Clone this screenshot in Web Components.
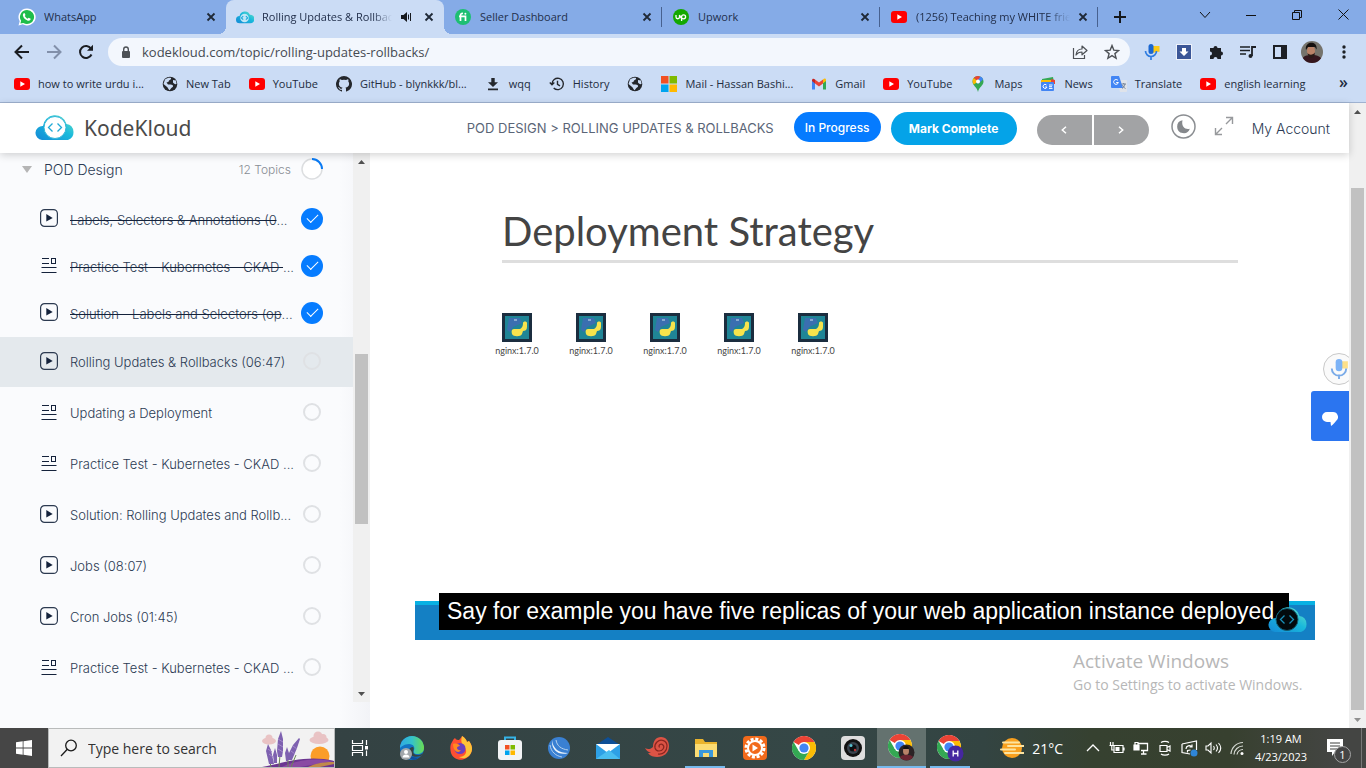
<!DOCTYPE html>
<html lang="en">
<head>
<meta charset="utf-8">
<title>Rolling Updates &amp; Rollbacks - KodeKloud</title>
<style>
html, body { margin: 0; height: 100%; }
body { overflow: hidden; background: #fff; font-family: "Open Sans", "Noto Sans", sans-serif; }
</style>
</head>
<body>
<app-desktop></app-desktop>
<script>
/* name: [width, height, viewBox, markup] */
const chromeArt = '<circle cx="12" cy="12" r="12" fill="#fff"/><path d="M12 12L1.6 6A12 12 0 0 1 22.4 6z" fill="#ea4335"/><path d="M12 6h10.4A12 12 0 0 1 12 24l5.200-9z" fill="#fbbc05"/><path d="M17.200 15L12 24A12 12 0 0 1 1.600 6l5.200 9z" fill="#34a853"/><circle cx="12" cy="12" r="6" fill="#fff"/><circle cx="12" cy="12" r="4.600" fill="#4285f4"/>';
const cloudGrad = '<defs><linearGradient id="g" x1="0" x2="1" y1="1" y2="0"><stop offset="0" stop-color="#1489d6"/><stop offset=".55" stop-color="#19b9dc"/><stop offset="1" stop-color="#6ce3c4"/></linearGradient></defs>';
const ytArt = '<rect y="2" width="16" height="12" rx="3" fill="#f00"/><path d="M6.300 5.300v5.400L11 8z" fill="#fff"/>';
const ICONS = {
  whatsapp: [18, 18, '0 0 18 18', '<path d="M9 .5a8.500 8.500 0 0 0-7.300 12.800L.5 17.500l4.300-1.200A8.500 8.500 0 1 0 9 .5z" fill="#fff"/><path d="M9 2a7 7 0 0 0-5.900 10.800L2.400 15.600l2.900-.7A7 7 0 1 0 9 2z" fill="#1fbd4a"/><path d="M6.500 5l1 2-.7 1.100c.7 1.300 1.500 2 2.800 2.700l1-1 2.100 1c0 1.400-1.400 2.300-2.900 1.900C7.300 12 5.300 9.900 4.900 7.600 4.700 6.300 5.400 5 6.500 5z" fill="#fff"/>'],
  cloudfav: [18, 18, '0 0 40 40', cloudGrad + '<path d="M8 34a8 8 0 0 1 0-16 12 12 0 0 1 23-3 9.500 9.500 0 0 1 1 19z" fill="url(#g)"/><circle cx="19" cy="22" r="9.500" fill="#bfe6f6"/><path d="M16 18l-4 4 4 4M22 18l4 4-4 4" fill="none" stroke="#19a9dc" stroke-width="2.500"/>'],
  cloud: [40, 26, '0 0 40 26', cloudGrad + '<path d="M7 25a7 7 0 0 1 1-14 12 12 0 0 1 23.500-2 8.300 8.300 0 0 1 1.500 16z" fill="url(#g)"/><circle cx="20" cy="12.500" r="11" fill="#fff" stroke="#2fb6d9"/><path d="M17.500 8.500L13.500 12.500l4 4M22.500 8.500l4 4-4 4" fill="none" stroke="#1fa9d6" stroke-width="1.300"/>'],
  cloudmark: [40, 26, '0 0 40 26', cloudGrad + '<path d="M7 25a7 7 0 0 1 1-14 12 12 0 0 1 23.500-2 8.300 8.300 0 0 1 1.500 16z" fill="url(#g)"/><circle cx="19" cy="12.500" r="11" fill="#020a0d" stroke="#135e74"/><path d="M16.500 8.500l-4 4 4 4M21.500 8.500l4 4-4 4" fill="none" stroke="#1990b8" stroke-width="1.300"/>'],
  fiverr: [16, 16, '0 0 16 16', '<circle cx="8" cy="8" r="8" fill="#1dbf73"/><path d="M5.500 12V6.500c0-1.500.8-2.200 2.500-2M4 7.400h6.500V12" fill="none" stroke="#fff" stroke-width="1.700"/><circle cx="10.400" cy="4.800" r="1" fill="#fff"/>'],
  upwork: [16, 16, '0 0 16 16', '<circle cx="8" cy="8" r="8" fill="#14a800"/><path d="M3 6v2a1.700 1.700 0 0 0 3.500 0V6c1 2.300 1.500 3 2.500 3.900M8.600 12V7.800a2 2 0 1 1 2 2c-1.200 0-2.200-.7-3-2" fill="none" stroke="#fff" stroke-width="1.300"/>'],
  youtube: [16, 16, '0 0 16 16', ytArt],
  close: [10, 10, '0 0 10 10', '<path d="M1.500 1.500l7 7M8.500 1.500l-7 7" stroke="#1f2937" stroke-width="1.800"/>'],
  audio: [12, 12, '0 0 12 12', '<path d="M1 4h2.500L7 1v10L3.500 8H1z" fill="#15181d"/><path d="M8.500 3.500v5M10.500 2v8" stroke="#15181d"/>'],
  plus: [12, 12, '0 0 12 12', '<path d="M6 0v12M0 6h12" stroke="#15181d" stroke-width="2"/>'],
  chev: [12, 8, '0 0 12 8', '<path d="M1 1l5 5.500L11 1" fill="none" stroke="#111"/>'],
  min: [10, 10, '0 0 10 10', '<path d="M0 5.500h10" stroke="#111"/>'],
  restore: [10, 10, '0 0 10 10', '<path d="M.5 2.500h7v7h-7zM2.500 2.500v-2h7v7h-2" fill="none" stroke="#111"/>'],
  winclose: [11, 11, '0 0 11 11', '<path d="M.5.5l10 10M10.500.5l-10 10" stroke="#111"/>'],
  back: [16, 16, '0 0 16 16', '<path d="M15 8H2M8 1.500L1.500 8 8 14.500" fill="none" stroke="#1a1d22" stroke-width="2"/>'],
  fwd: [16, 16, '0 0 16 16', '<path d="M1 8h13M8 1.500L14.500 8 8 14.500" fill="none" stroke="#8290aa" stroke-width="2"/>'],
  reload: [16, 16, '0 0 16 16', '<path d="M13.500 10.500A6 6 0 1 1 13 4.600" fill="none" stroke="#1a1d22" stroke-width="2"/><path d="M15 .8v6H9z" fill="#1a1d22"/>'],
  lock: [10, 13, '0 0 10 13', '<rect x="1" y="5" width="8" height="7" rx="1" fill="#4d5156"/><path d="M2.700 5.500V3.300a2.300 2.300 0 0 1 4.600 0v2.200" fill="none" stroke="#4d5156" stroke-width="1.400"/>'],
  share: [16, 16, '0 0 16 16', '<path d="M1.500 4v10.500h11V11" fill="none" stroke="#4d5156" stroke-width="1.200"/><path d="M4 11c.4-4 2.500-6 6-6V2l5 4.500-5 4.300V8C7.500 8 5.500 8.800 4 11z" fill="none" stroke="#4d5156" stroke-width="1.200" stroke-linejoin="round"/>'],
  star: [16, 16, '0 0 16 16', '<path d="M8 1.600l1.800 4.500 4.800.4-3.700 3.100 1.200 4.700L8 11.700l-4.100 2.600 1.200-4.700L1.400 6.500l4.800-.4z" fill="none" stroke="#4d5156" stroke-width="1.400"/>'],
  voice: [16, 16, '0 0 16 16', '<path d="M8.500 2h7v5.800h-2L8.500 9z" fill="#fbc916"/><rect x="4.500" y="0" width="5" height="10" rx="2.500" fill="#1967d2"/><path d="M1.500 7a5.500 5.500 0 0 0 11 0M7 12.500V16" fill="none" stroke="#2f7de1" stroke-width="1.700"/>'],
  voicelight: [18, 20, '0 0 16 18', '<path d="M8.500 2h7.500v6.500h-5z" fill="#fde08a"/><rect x="5" y="0" width="6" height="11" rx="3" fill="#7cb3f7"/><path d="M1.500 8.500a6.300 6.300 0 0 0 13 0M8 14v4" fill="none" stroke="#7aabe8" stroke-width="1.700"/>'],
  down: [16, 16, '0 0 16 16', '<rect width="16" height="16" fill="#eef2fa"/><rect x="1" y="1" width="14" height="14" fill="#3b5697"/><path d="M6 4h4v3.500h2.500L8 12 3.500 7.500H6z" fill="#fff"/>'],
  puzzle: [16, 16, '0 0 16 16', '<path d="M2 4h3.500a2 2 0 1 1 4 0H13v3.500a2 2 0 1 1 0 4V15H9.500a2 2 0 1 0-4 0H2v-3.500a2 2 0 1 0 0-4z" fill="#1d2025"/>'],
  queue: [16, 16, '0 0 16 16', '<path d="M0 3h10M0 6.500h10M0 10h6" stroke="#1d2025" stroke-width="1.700"/><circle cx="10.500" cy="12" r="2" fill="#1d2025"/><path d="M12 12V3h4" fill="none" stroke="#1d2025" stroke-width="1.800"/>'],
  panel: [14, 14, '0 0 14 14', '<rect x="1" y="1" width="12" height="12" fill="none" stroke="#1d2025" stroke-width="2"/><rect x="8" y="1" width="5" height="12" fill="#1d2025"/>'],
  avatar: [22, 22, '0 0 22 22', '<defs><clipPath id="c"><circle cx="11" cy="11" r="11"/></clipPath></defs><g clip-path="url(#c)"><rect width="22" height="22" fill="#75736c"/><path d="M0 22c1-8 6-8 11-8s10 1 11 8z" fill="#35161e"/><ellipse cx="10" cy="10" rx="4" ry="5.500" fill="#b98268"/><path d="M5 9C3 0 17-1 15.500 8.500L14 6H7z" fill="#15100f"/><path d="M6.500 12c2 2.500 5.500 2 7.500-.5-.3 3-1.500 5.500-3.700 5.500S7 15 6.500 12z" fill="#2a1a17"/></g>'],
  dots: [4, 16, '0 0 4 16', '<circle cx="2" cy="3" r="1.700" fill="#1d2025"/><circle cx="2" cy="8" r="1.700" fill="#1d2025"/><circle cx="2" cy="13" r="1.700" fill="#1d2025"/>'],
  globe: [16, 16, '0 0 16 16', '<circle cx="8" cy="8" r="7.300" fill="#24272c"/><path d="M3 3.500c2-1.800 5-2 6-1.500.5 1.500-1 1.800-2 2.500-.2 1.500-1.500 1.500-2.500 2L6 8.500c2 0 3.500-.5 4.500.5s.5 2-.5 2.500-1.500 2-2.500 2.700C6 13 6 11.500 4.500 10.500L1.500 8zM11 4l3 .5.5 3.500c-1.500.5-3-.5-3.500-1.500z" fill="#cbdcf5"/>'],
  github: [16, 16, '0 0 16 16', '<path d="M8 0a8 8 0 0 0-2.500 15.600c.4.100.5-.2.500-.4v-1.400c-2.200.5-2.700-1-2.700-1-.4-.9-.9-1.200-.9-1.200-.7-.5.1-.5.1-.5.8.1 1.200.8 1.200.8.700 1.200 1.900.9 2.300.7.100-.5.300-.9.500-1.100-1.800-.2-3.600-.9-3.600-4 0-.8.300-1.500.8-2.100-.1-.2-.4-1 .1-2.100 0 0 .7-.2 2.200.8a7.600 7.600 0 0 1 4 0c1.500-1 2.200-.8 2.200-.8.400 1.100.2 1.900.1 2.100.5.600.8 1.300.8 2.100 0 3.100-1.900 3.800-3.700 4 .3.300.6.800.6 1.500v2.200c0 .2.100.5.500.4A8 8 0 0 0 8 0z" fill="#24272c"/>'],
  dl: [16, 16, '0 0 16 16', '<path d="M6.300 2h3.400v4.300H13L8 11 3 6.300h3.300zM3 12.500h10v1.800H3z" fill="#24272c"/>'],
  history: [16, 16, '0 0 16 16', '<path d="M3 8a5.700 5.700 0 1 1 1.700 4M.8 6.500L3 8.700l2.300-2.200M8.500 4.800V8.300L11 9.800" fill="none" stroke="#24272c" stroke-width="1.400"/>'],
  ms: [16, 16, '0 0 16 16', '<path d="M0 0h7.500v7.500H0z" fill="#f25022"/><path d="M8.500 0H16v7.500H8.500z" fill="#7fba00"/><path d="M0 8.500h7.500V16H0z" fill="#00a4ef"/><path d="M8.500 8.500H16V16H8.500z" fill="#ffb900"/>'],
  gmail: [16, 16, '0 0 16 16', '<path d="M1 4v9.500h3V7z" fill="#4285f4"/><path d="M15 4v9.500h-3V7z" fill="#34a853"/><path d="M12 3.500V7.300l3-2.300V4c0-1.400-1.500-2-3-.5z" fill="#fbbc04"/><path d="M4 3.500l4 3 4-3v4L8 10.500 4 7.500z" fill="#ea4335"/><path d="M1 4.500C1 2.500 2.800 2.500 4 3.500v4L1 5z" fill="#c5221f"/>'],
  maps: [16, 16, '0 0 16 16', '<path d="M8 0a5.500 5.500 0 0 0-5.500 5.500C2.500 9.500 7 11 8 16c1-5 5.500-6.500 5.500-10.500A5.500 5.500 0 0 0 8 0z" fill="#34a853"/><path d="M8 0a5.500 5.500 0 0 0-4.300 2L8 5.500 11 1z" fill="#ea4335"/><path d="M3.700 2c-1.500 2-1.500 4 0 6.500L8 5.500z" fill="#fbbc04"/><path d="M10.500.6L6.500 6 8 8l5-4.500C12.500 2 11.500 1 10.500.6z" fill="#4285f4"/><circle cx="8" cy="5.500" r="2" fill="#fff"/>'],
  news: [16, 16, '0 0 16 16', '<path d="M2 3l11-2 1 5H2z" fill="#34a853"/><path d="M1 4h14v4H1z" fill="#fbbc04"/><path d="M11 3l4 1v4h-4z" fill="#ea4335"/><rect x="1" y="6" width="13" height="9" rx="1" fill="#4285f4"/><path d="M6.500 9A2 2 0 1 0 7 11H5.200M9 9h3.500M9 10.700h3M9 12.400h3.500" fill="none" stroke="#fff"/>'],
  translate: [16, 16, '0 0 16 16', '<path d="M6 4h9a1 1 0 0 1 1 1v10a1 1 0 0 1-1 1H9z" fill="#dfe3ea"/><path d="M1 0h7l4 12H1a1 1 0 0 1-1-1V1a1 1 0 0 1 1-1z" fill="#4285f4"/><path d="M7 4.500A2.400 2.400 0 1 0 7.400 6.500H5.200" fill="none" stroke="#fff"/><path d="M10.500 8H15M12.700 7v1M14 8c-.5 2.500-2 4-3 4.500M11.500 9c.5 1.500 2 3 3 3.500" fill="none" stroke="#6c7a90" stroke-width=".9"/>'],
  moon: [25, 25, '0 0 25 25', '<circle cx="12.500" cy="12.500" r="11.500" fill="none" stroke="#8b8e92" stroke-width="1.500"/><path d="M11.500 6.200a6.500 6.500 0 1 0 7.300 8.500C14.500 16 10 12.500 11.500 6.200z" fill="#85888c"/>'],
  expand: [20, 20, '0 0 20 20', '<path d="M12 1.500h6.500V8M18.500 1.500L12 8M1.500 12v6.500H8M1.500 18.500L8 12" fill="none" stroke="#97999c" stroke-width="1.400"/>'],
  left: [8, 8, '0 0 8 8', '<path d="M6 .7L2.300 4 6 7.300" fill="none" stroke="#fff" stroke-width="1.500"/>'],
  right: [8, 8, '0 0 8 8', '<path d="M2 .7L5.700 4 2 7.300" fill="none" stroke="#fff" stroke-width="1.500"/>'],
  play: [18, 18, '0 0 18 18', '<rect x=".6" y=".6" width="16.800" height="16.800" rx="4" fill="none" stroke="#2c3a50" stroke-width="1.200"/><path d="M6.300 5v7.600L12.700 9z" fill="#14223b"/>'],
  lab: [18, 18, '0 0 18 18', '<path d="M2 2.500h7M2 7.500h7M1.500 11.500h15M1.500 16.500h15" stroke="#14223b" stroke-width="1.100"/><rect x="11.500" y="2.500" width="4" height="5" fill="none" stroke="#14223b"/>'],
  tri: [10, 7, '0 0 10 7', '<path d="M0 0h10L5 7z" fill="#b5b5b5"/>'],
  ring: [22, 22, '0 0 22 22', '<circle cx="11" cy="11" r="10" fill="#fff" stroke="#dcdee0" stroke-width="1.500"/><path d="M11 1a10 10 0 0 1 10 10" fill="none" stroke="#0a7bf5" stroke-width="2"/>'],
  up: [7, 4, '0 0 7 4', '<path d="M0 4L3.500 0 7 4z" fill="#505050"/>'],
  dn: [7, 4, '0 0 7 4', '<path d="M0 0l3.500 4L7 0z" fill="#505050"/>'],
  dnlight: [7, 4, '0 0 7 4', '<path d="M0 0l3.500 4L7 0z" fill="#909090"/>'],
  pod: [30, 29, '0 0 30 29', '<rect width="30" height="29" fill="#1b2d3f"/><rect x="3" y="3" width="24" height="23" fill="#1f8596"/><path d="M7 5h11l2 5-9 4-3 5-3-2z" fill="#3a6fb0"/><path d="M12 7h3" stroke="#cfe3f0"/><path d="M21 10c0-2 4-2 4 0v4c0 3-2 4-4 4l-1 3c-1 3-9 3-10 0-1-4 0-5 3-5h4c2 0 4-2 4-6z" fill="#f7e34c"/>'],
  chat: [16, 14, '0 0 16 14', '<path d="M5 0h6a5 5 0 0 1 3 9c-.8.900-2.500 3.500-5 5l-.5-4H5A5 5 0 0 1 5 0z" fill="#fff"/>'],
  win: [16, 16, '0 0 16 16', '<path d="M0 2.300L6.700 1.300v6.300H0zM7.500 1.200L16 0v7.600H7.500zM0 8.400h6.700v6.300L0 13.700zM7.500 8.400H16V16l-8.500-1.200z" fill="#fff"/>'],
  search: [18, 18, '0 0 18 18', '<circle cx="11" cy="6.500" r="5.300" fill="none" stroke="#1a1a1a" stroke-width="1.300"/><path d="M7.300 10.300L1 17" stroke="#1a1a1a" stroke-width="1.300"/>'],
  field: [72, 38, '0 0 72 38', '<g fill="#e9c3c4"><ellipse cx="7" cy="12" rx="7" ry="3.500"/><circle cx="7" cy="9" r="3.500"/><ellipse cx="57" cy="11" rx="9.500" ry="4"/><circle cx="56" cy="7" r="4.500"/><circle cx="61" cy="8.500" r="3.500"/></g><circle cx="58" cy="27" r="9.500" fill="#fb9d28"/><path d="M0 38c18-3 44-13 72-6v6z" fill="#6b3590"/><path d="M20 38c12-6 30-10 52-6l-34 6z" fill="#8a4aa3"/><path d="M46 38c8-4 16-5 26-5v2l-14 3z" fill="#c08a4a"/><path d="M17 38l1-12M9 38l-2-10M29 38l5-12M26 38v-8" stroke="#6b8556"/><g fill="#7e61b0"><path d="M16 28l-1-6 1-12 3-8 2 8v12l-1 6zM4 22l2-7 3 6 3 14H7zM26 31l1-7 4-8 6-7 1 1-3 9-5 12zM23 24l2-6 2 6-1 8h-2zM12 34l-1-8 2-7 2 7v8z"/></g><g stroke="#a48acb" fill="none"><path d="M16 10l5 3M16 15l5 3M16 20l5 3M6 20l4 3M7 25l4 3M31 17l4 3M29 22l4 3"/></g>'],
  taskview: [18, 18, '0 0 18 18', '<path d="M1.500 1v3.500h10V1M1.500 17v-3.500h10V17M1.500 6.500h10v5h-10zM15.500 1v5M15.500 11.500V17" fill="none" stroke="#fff" stroke-width="1.200"/><rect x="14" y="7" width="3" height="3.500" fill="#fff"/>'],
  edge: [26, 26, '0 0 26 26', '<defs><linearGradient id="e" x2="1"><stop stop-color="#2fa9e4"/><stop offset=".5" stop-color="#35c3c9"/><stop offset="1" stop-color="#6bdc50"/></linearGradient></defs><circle cx="13" cy="13" r="12" fill="#1273c4"/><path d="M1 13a12 12 0 0 1 24 0c0 4-3 6-7 6-3 0-4-2-3-4s0-6-5-6-8 3-9 4z" fill="url(#e)"/><path d="M14 12c2 2-1 4 1 7 3 2 7 1 9-1l-2 3c-6 2-12 0-12-5 0-3 2-4 4-4z" fill="#344343"/><path d="M9 14c0 6 5 10 12 8l-5 3c-7 0-9-6-7-11z" fill="#0f4f9c"/><circle cx="7" cy="19" r="6" fill="#a2a7ab"/><circle cx="7" cy="17" r="2" fill="#fff"/><path d="M3.500 22.500c0-4 7-4 7 0z" fill="#fff"/>'],
  firefox: [24, 24, '0 0 24 24', '<path d="M3 6c1-1 1-3 3-4 1 2 3 2 4 2 3-3 3-4 3-4 3 2 4 3 5 6l2-1c3 4 4 8 2 12-4 9-17 9-20 0C1 13 1 9 3 6z" fill="#ff4f32"/><path d="M13 0c3 2 4 3 5 6l2-1c3 4 4 8 2 12-3 6-9 6-12 4 6 0 9-5 6-9-2-3-5-5-3-12z" fill="#ffc338"/><circle cx="11" cy="12.500" r="5.500" fill="#6a3fc0"/><path d="M4 8c3-1 6 0 7 2-2 0-3 1-3 2s2 3 4 2c-2 4-8 2-8-6z" fill="#ff8a1f"/>'],
  store: [24, 24, '0 0 24 24', '<path d="M7 5V1.500h10V5" fill="none" stroke="#35b4e8" stroke-width="2"/><rect x="0" y="4" width="24" height="20" rx="3" fill="#f2f4f6"/><path d="M7 9h4.500v4.500H7z" fill="#f25022"/><path d="M12.500 9H17v4.500h-4.500z" fill="#7fba00"/><path d="M7 14.500h4.500V19H7z" fill="#00a4ef"/><path d="M12.500 14.500H17V19h-4.500z" fill="#ffb900"/>'],
  quick: [22, 22, '0 0 22 22', '<circle cx="11" cy="11" r="11" fill="#3a80d2"/><path d="M4 3c1 9 7 13 16 13-8 3-17-2-16-13z" fill="#eef5fc"/><path d="M8 3c1 6 5 9 12 10M2 8c1 7 6 11 12 12" fill="none" stroke="#b6d2ee"/>'],
  mail: [26, 24, '0 0 26 24', '<path d="M1 9L13 1l12 8z" fill="#0e4f97"/><path d="M1 8h24v15H1z" fill="#2ea0e6"/><path d="M1 8h24L13 17z" fill="#fff"/><path d="M1 23L14 14l11 9z" fill="#49bdf0"/>'],
  shell: [24, 22, '0 0 24 22', '<path d="M0 11c3 2 6 1 8-1C8 4 11 0 16 0s8 4 8 9c0 7-5 11-12 11-3 0-7-1-9-4h3c-3-1-5-3-6-5z" fill="#dc5345"/><path d="M13 17c5 1 9-3 9-8s-6-8-10-4-2 9 2 9 6-4 4-6-5 0-3.500 2.500" fill="none" stroke="#8a2620" stroke-width="1.200"/>'],
  folder: [24, 22, '0 0 24 22', '<path d="M1 2h8l2 3h12v15H1z" fill="#eab32c"/><path d="M1 7h22v13H1z" fill="#fcdc73"/><path d="M5 20v-7h14v7h-4v-4H9v4z" fill="#3a98dc"/>'],
  orange: [24, 24, '0 0 24 24', '<rect width="24" height="24" rx="4" fill="#f26a1b"/><circle cx="12" cy="12" r="9" fill="none" stroke="#fff" stroke-width="3" stroke-dasharray="3 1.712"/><circle cx="12" cy="12" r="7" fill="none" stroke="#fff" stroke-width="2"/><path d="M9.500 8.500v7l5.500-3.500z" fill="#fff"/>'],
  chrome: [24, 24, '0 0 24 24', chromeArt],
  chromeface: [27, 27, '0 0 27 27', chromeArt + '<circle cx="18.500" cy="18.500" r="8" fill="#2b2325"/><ellipse cx="18" cy="17" rx="3" ry="4" fill="#b98268"/><path d="M15 15c0-4 6-4 6 0z" fill="#111"/><path d="M12 23c2-3 11-3 13 0a8 8 0 0 1-13 0z" fill="#6b2430"/>'],
  chromeh: [27, 27, '0 0 27 27', chromeArt + '<circle cx="18.500" cy="18.500" r="8" fill="#4527a0"/><path d="M16.200 15.500v6M20.800 15.500v6M16.200 18.500h4.600" stroke="#fff" stroke-width="1.300"/>'],
  camera: [24, 24, '0 0 24 24', '<rect width="24" height="24" rx="4" fill="#dedede"/><circle cx="12" cy="12" r="9" fill="#111"/><circle cx="12" cy="12" r="6" fill="#39434d"/><circle cx="12" cy="12" r="3.500" fill="#0c0f12"/><circle cx="10" cy="9.500" r="1.500" fill="#58c0d0"/><circle cx="14" cy="14" r="1.200" fill="#b33"/>'],
  sun: [24, 22, '0 0 24 22', '<circle cx="12" cy="11" r="10" fill="#f9a01e"/><path d="M3 5.500h16M8 9h16M1 12.500h14M5 16h19" stroke="#fde3a0" stroke-width="2" stroke-linecap="round"/>'],
  traychev: [14, 8, '0 0 14 8', '<path d="M1 7l6-6 6 6" fill="none" stroke="#fff" stroke-width="1.300"/>'],
  battery: [16, 14, '0 0 16 14', '<path d="M5 4.500h9v7H5zM15 6.500v3M1.500 1v3M4 1v3M.5 4.500h4.500M2.800 5v4h2" fill="none" stroke="#fff" stroke-width="1.200"/><path d="M6.500 6h4v4h-4z" fill="#fff"/>'],
  net: [16, 16, '0 0 16 16', '<path d="M5 3.500h9.500v7H8M10.500 10.500v3M8 14h5.500" fill="none" stroke="#fff" stroke-width="1.300"/><path d="M1 5h5v5H1zM2 5V2.500h3V5" fill="none" stroke="#fff" stroke-width="1.200"/><path d="M1 5h5v5H1z" fill="#fff"/>'],
  meet: [12, 16, '0 0 12 16', '<path d="M1 5.500h7v6H1zM8 7.500l3-1.500v5L8 9.500M2 2.500c2-1.500 6-1.500 8 0M2 14c2 1.500 6 1.500 8 0" fill="none" stroke="#fff" stroke-width="1.200"/>'],
  sync: [17, 17, '0 0 17 17', '<path d="M1 4L15.500 1v9M1 4v8.500l8 1.500M5 9c0-3 4-4.500 6-2M11 4.500V7H8.500M9.500 10l-3 .5v2" fill="none" stroke="#fff" stroke-width="1.200"/><circle cx="13" cy="13" r="3.500" fill="#2f86d8"/>'],
  volume: [17, 14, '0 0 17 14', '<path d="M1 5h2l3-3v10L3 9H1zM8.500 5q1.500 2 0 4M11 3.500q3 3.500 0 7M13.500 2q4.500 5 0 10" fill="none" stroke="#fff" stroke-width="1.100"/>'],
  wifi: [14, 14, '0 0 14 14', '<path d="M1 13A12 12 0 0 1 13 1.500M4 13.500A9 9 0 0 1 13 5M7 13.500A6 6 0 0 1 13 8.500" fill="none" stroke="#d6dad4" stroke-width="1.200"/><circle cx="12" cy="12.500" r="1.500" fill="#fff"/>'],
  note: [26, 26, '0 0 26 26', '<path d="M1 4h16v13h-8l-3 4v-4H1z" fill="#fff"/><path d="M4 8h10M4 11h10M4 14h7" stroke="#3f403f"/>']
};

function define(name, css, html, setup) {
  const tpl = document.createElement('template');
  tpl.innerHTML = `<style>*{box-sizing:border-box}button{font:inherit;border:0;background:none;padding:0;color:inherit}a{color:inherit;text-decoration:none}${css}</style>${html}`;
  customElements.define(name, class extends HTMLElement {
    connectedCallback() {
      if (this.shadowRoot) return;
      this.attachShadow({ mode: 'open' }).append(tpl.content.cloneNode(true));
      if (setup) setup(this, this.shadowRoot);
    }
  });
}

define('ui-icon', ':host{display:inline-flex;flex:none}svg{display:block}', '<span></span>', (el, root) => {
  const [w, h, box, art] = ICONS[el.getAttribute('name')];
  root.querySelector('span').innerHTML = `<svg width="${w}" height="${h}" viewBox="${box}" aria-hidden="true">${art}</svg>`;
});

define('browser-tab', `
:host{display:block;flex:0 1 218px;min-width:0;height:34px;position:relative;font-size:11px;color:#222f4b}
:host([active]){background:#cbdcf5;border-radius:8px 8px 0 0}
:host([active])::before,:host([active])::after{content:"";position:absolute;bottom:0;width:8px;height:8px}
:host([active])::before{left:-8px;background:radial-gradient(circle at 0 0,#85abe7 8px,#cbdcf5 8px)}
:host([active])::after{right:-8px;background:radial-gradient(circle at 100% 0,#85abe7 8px,#cbdcf5 8px)}
:host([divided])::after{content:"";position:absolute;right:0;top:7px;width:1px;height:20px;background:#47618f}
.tab{display:flex;align-items:center;height:100%;padding:0 10px;gap:8px}
.main{display:flex;align-items:center;gap:8px;flex:1;min-width:0;height:100%;text-align:left}
.label{flex:1;min-width:0;margin-bottom:2px;white-space:nowrap;overflow:hidden}
:host([fade]) .label{-webkit-mask:linear-gradient(90deg,#000 85%,transparent)}
.end{width:10px}.audio{display:none}:host([active]) .audio{display:inline-flex;width:12px;margin-right:4px}
`, '<div class="tab"><button class="main" role="tab"><slot name="icon"></slot><span class="label"><slot></slot></span></button><ui-icon class="audio" name="audio"></ui-icon><button class="end" aria-label="Close tab"><ui-icon name="close"></ui-icon></button></div>');

define('window-strip', `
:host{display:flex;height:34px;background:#85abe7;padding-left:8px}
.plus{width:44px;display:grid;place-items:center}
.win{margin-left:auto;display:flex;height:29px}
.win button{width:46px;display:grid;place-items:center}
browser-tab>ui-icon{width:18px;justify-content:center}
`, `<browser-tab><ui-icon slot="icon" name="whatsapp"></ui-icon>WhatsApp</browser-tab>
<browser-tab active fade><ui-icon slot="icon" name="cloudfav"></ui-icon>Rolling Updates &amp; Rollbacks</browser-tab>
<browser-tab divided><ui-icon slot="icon" name="fiverr"></ui-icon>Seller Dashboard</browser-tab>
<browser-tab divided><ui-icon slot="icon" name="upwork"></ui-icon>Upwork</browser-tab>
<browser-tab divided fade><ui-icon slot="icon" name="youtube"></ui-icon>(1256) Teaching my WHITE friend</browser-tab>
<button class="plus" aria-label="New tab"><ui-icon name="plus"></ui-icon></button>
<div class="win"><button aria-label="Search tabs"><ui-icon name="chev"></ui-icon></button><button aria-label="Minimize"><ui-icon name="min"></ui-icon></button><button aria-label="Restore"><ui-icon name="restore"></ui-icon></button><button aria-label="Close"><ui-icon name="winclose"></ui-icon></button></div>`);

define('tool-bar', `
:host{display:flex;align-items:center;height:36px;background:#cbdcf5;padding:0 6px}
button{width:32px;height:32px;display:grid;place-items:center;flex:none}
.omni{flex:1;margin:0 6px;height:28px;border-radius:14px;background:#f3f7fd;display:flex;align-items:center;padding:0 2px 0 13px;gap:11px}
.acts{display:flex}
input{flex:1;min-width:0;border:0;background:none;outline:0;padding:0;font:13px "Open Sans",sans-serif;color:#454a52}
`, `<button aria-label="Back"><ui-icon name="back"></ui-icon></button><button aria-label="Forward"><ui-icon name="fwd"></ui-icon></button><button aria-label="Reload"><ui-icon name="reload"></ui-icon></button>
<div class="omni"><ui-icon name="lock"></ui-icon><input aria-label="Address" value="kodekloud.com/topic/rolling-updates-rollbacks/"><div class="acts"><button aria-label="Share"><ui-icon name="share"></ui-icon></button><button aria-label="Bookmark"><ui-icon name="star"></ui-icon></button></div></div>
${[['voice', 'Voice'], ['down', 'Downloader'], ['puzzle', 'Extensions'], ['queue', 'Media'], ['panel', 'Side panel'], ['avatar', 'Profile'], ['dots', 'Menu']].map(([n, l]) => `<button aria-label="${l}"><ui-icon name="${n}"></ui-icon></button>`).join('')}`);

define('bookmark-bar', `
:host{display:flex;align-items:center;height:33px;background:#cbdcf5;border-bottom:1px solid #9fb2d0;padding:0 18px 4px 14px;font-size:11px;color:#222c40;gap:18px}
a{display:flex;align-items:center;gap:8px;white-space:nowrap}
span{margin-bottom:2px}
button{margin-left:auto;font-size:16px;font-weight:600;line-height:20px;padding-bottom:4px}
`, [['youtube', 'how to write urdu i...'], ['globe', 'New Tab'], ['youtube', 'YouTube'], ['github', 'GitHub - blynkkk/bl...'], ['dl', 'wqq'], ['history', 'History'], ['globe', ''], ['ms', 'Mail - Hassan Bashi...'], ['gmail', 'Gmail'], ['youtube', 'YouTube'], ['maps', 'Maps'], ['news', 'News'], ['translate', 'Translate'], ['youtube', 'english learning']]
  .map(([i, t]) => `<a href="#"${t ? '' : ' aria-label="Site"'}><ui-icon name="${i}"></ui-icon>${t ? `<span>${t}</span>` : ''}</a>`).join('') + '<button aria-label="More bookmarks">»</button>');

define('scroll-bar', `
:host{display:flex;flex-direction:column;align-items:center;width:17px;flex:none;background:#f0f0f0}
.cap{height:17px;display:grid;place-items:center}
.track{flex:1;display:flex;flex-direction:column;width:13px}
.pre{flex:var(--pre)}.thumb{flex:var(--thumb);background:#c1c1c1}.post{flex:var(--post)}
`, '<div class="cap"><ui-icon name="up"></ui-icon></div><div class="track"><div class="pre"></div><div class="thumb"></div><div class="post"></div></div><div class="cap"><slot><ui-icon name="dn"></ui-icon></slot></div>');

define('course-header', `
:host{display:flex;align-items:center;height:50px;background:#fff;padding:0 19px 0 35px;box-shadow:0 2px 8px #0000002e;font-family:Inter,sans-serif;position:relative;z-index:2;white-space:nowrap}
.brand{display:flex;align-items:center;gap:9px;font:21px "Noto Sans",sans-serif;color:#4a4a4a;margin-right:auto}
.crumb{font-size:13px;color:#5a6577;margin-right:20px}
.state{background:#057bff;color:#fff;font-size:12px;font-weight:500;width:87px;height:30px;border-radius:15px;display:grid;place-items:center;margin:0 10px 2px 0}
.done{background:#04a3e8;color:#fff;font-size:12px;font-weight:700;width:126px;height:33px;border-radius:17px;margin-right:20px}
.nav{display:flex;gap:2px;margin:3px 22px 0 0}
.nav button{width:55px;height:30px;background:#a2a3a5;display:grid;place-items:center}
.nav button:first-child{border-radius:15px 0 0 15px}.nav button:last-child{border-radius:0 15px 15px 0}
.ic{margin-right:18px}
.me{font-size:14px;font-weight:300;color:#2b3a53}
`, `<a class="brand" href="#"><ui-icon name="cloud"></ui-icon><span>KodeKloud</span></a>
<div class="crumb">POD DESIGN &gt; ROLLING UPDATES &amp; ROLLBACKS</div><div class="state">In Progress</div><button class="done">Mark Complete</button>
<div class="nav"><button aria-label="Previous"><ui-icon name="left"></ui-icon></button><button aria-label="Next"><ui-icon name="right"></ui-icon></button></div>
<button class="ic" aria-label="Dark mode"><ui-icon name="moon"></ui-icon></button><button class="ic" aria-label="Focus mode"><ui-icon name="expand"></ui-icon></button><a class="me" href="#">My Account</a>`);

define('topic-row', `
:host{display:flex;align-items:center;height:50px;margin-bottom:1px;padding:0 30px 0 40px;color:#2b3a53;font-size:13px;font-weight:300}
:host([done]){height:47px;margin:0}
:host([active]){background:#e4e9ed}
a{display:flex;align-items:center;flex:1;min-width:0;gap:12px}
ui-icon{margin-bottom:3px}
.t{white-space:nowrap}
::slotted(s){text-decoration-color:#14223b}
input{appearance:none;margin:0 2px 3px 0;width:18px;height:18px;border:2px solid #dfe1e4;border-radius:50%;background:#fff0;flex:none}
input:checked{width:22px;height:22px;margin:0 0 2px;background:#067cff;border:0;display:grid;place-items:center}
input:checked::after{content:"";width:10px;height:5px;border:solid #fff;border-width:0 0 1px 1px;transform:rotate(-45deg);margin-bottom:3px}
`, '<a href="#"><span class="i"></span><span class="t"><slot></slot></span></a><input type="checkbox" aria-label="Completed">', (el, root) => {
  root.querySelector('.i').outerHTML = `<ui-icon name="${el.getAttribute('kind')}"></ui-icon>`;
  root.querySelector('input').checked = el.hasAttribute('done');
});

define('course-sidebar', `
:host{display:flex;width:370px;flex:none;background:linear-gradient(90deg,#fafbfd 340px,#f2f3f7);font-family:Inter,sans-serif}
nav{flex:1;min-width:0}
.head{display:flex;align-items:center;height:43px;padding:0 30px 11px 22px;font-size:14px;font-weight:300;color:#2b3a53}
.head b{font-weight:300;margin:0 auto 0 12px}
.head span{font-size:12px;color:#888d94;margin-right:10px}
scroll-bar{margin-bottom:26px;--pre:184;--thumb:170;--post:161}
`, `<nav aria-label="Topics"><div class="head"><ui-icon name="tri"></ui-icon><b>POD Design</b><span>12 Topics</span><ui-icon name="ring"></ui-icon></div>
<topic-row done kind="play"><s>Labels, Selectors &amp; Annotations (0</s>...</topic-row>
<topic-row done kind="lab"><s>Practice Test - Kubernetes - CKAD </s>...</topic-row>
<topic-row done kind="play"><s>Solution - Labels and Selectors (op</s>...</topic-row>
<topic-row active kind="play">Rolling Updates &amp; Rollbacks (06:47)</topic-row>
<topic-row kind="lab">Updating a Deployment</topic-row>
<topic-row kind="lab">Practice Test - Kubernetes - CKAD ...</topic-row>
<topic-row kind="play">Solution: Rolling Updates and Rollb...</topic-row>
<topic-row kind="play">Jobs (08:07)</topic-row>
<topic-row kind="play">Cron Jobs (01:45)</topic-row>
<topic-row kind="lab">Practice Test - Kubernetes - CKAD ...</topic-row></nav><scroll-bar></scroll-bar>`);

define('lesson-video', `
:host{display:flex;flex-direction:column;height:487px;margin:0 34px 0 45px;position:relative;font-family:Lato,sans-serif;color:#444}
.slide{flex:1;padding:52px 77px 0 78px}
h1{font-size:40px;line-height:52px;font-weight:400;margin:0 0 0 9px;padding-bottom:3px;border-bottom:3px solid #dedede}
.pods{display:grid;grid-template-columns:repeat(5,48px);column-gap:26px;margin-top:50px}
.pods div{display:grid;justify-items:center;font-size:9px;line-height:17px;white-space:nowrap}
.bar{height:39px;background:#1480c4;border-top:4px solid #08b1e3}
.cap{position:absolute;left:24px;bottom:10px;background:#000;color:#fff;font:23px/37px "Liberation Sans",sans-serif;padding:0 8px;white-space:nowrap}
.mark{position:absolute;right:7px;bottom:7px}
`, `<div class="slide"><h1>Deployment Strategy</h1><div class="pods">${'<div><ui-icon name="pod"></ui-icon>nginx:1.7.0</div>'.repeat(5)}</div></div><div class="bar"></div><ui-icon class="mark" name="cloudmark"></ui-icon><div class="cap">Say for example you have five replicas of your web application instance deployed.</div><ui-icon class="mark" name="cloudmark"></ui-icon>`.replace('<ui-icon class="mark" name="cloudmark"></ui-icon>', ''));

define('lesson-view', `
:host{display:flex;flex-direction:column;flex:1;min-width:0;position:relative;overflow:hidden}
.act{align-self:flex-end;width:236px;margin:9px 40px 0 0;color:#b7b7b7;font-size:14px;line-height:21px;white-space:nowrap}
.act b{display:block;font-weight:400;font-size:19px;line-height:25px}
.float{position:absolute;right:0;top:200px;display:grid;justify-items:end;gap:6px}
.mic{width:32px;height:32px;border:1px solid #c9c9c9;border-radius:50%;background:#fafafa;display:grid;place-items:center;margin-right:-6px}
.chat{width:38px;height:50px;background:#2b75f0;border-radius:3px 0 0 3px;display:grid;place-items:center;padding-top:6px}
`, `<lesson-video></lesson-video><div class="act"><b>Activate Windows</b>Go to Settings to activate Windows.</div>
<div class="float"><button class="mic" aria-label="Voice"><ui-icon name="voicelight"></ui-icon></button><button class="chat" aria-label="Chat"><ui-icon name="chat"></ui-icon></button></div>`);

define('task-bar', `
:host{display:flex;height:40px;flex:none;background:linear-gradient(90deg,#464646 0,#464646 48px,#344243 335px,#354746 60%,#334442 72%,#364130 80%,#37402f 90%,#444543 98%);color:#fff;font-size:14px}
button{display:grid;place-items:center}
.start{width:48px}
label{width:287px;display:flex;align-items:center;background:#f2f2f2;border:1px solid #b9bbbb;padding-left:11px;gap:10px}
input{flex:1;min-width:0;border:0;background:none;outline:0;padding:0;font:14px "Open Sans",sans-serif}
input::placeholder{color:#333;opacity:1}
.app{width:49px;flex:none}
.taskview{margin-right:3px}
.chromeface{background:#64726f;border-bottom:2px solid #76b9ed}
.folder,.chromeh{background:linear-gradient(#76b9ed,#76b9ed) 4px 100%/40px 2px no-repeat}
.wx{display:flex;align-items:center;gap:8px;margin-left:auto;margin-right:18px}
.tray{display:flex}.tray button{width:24px}
.clock{width:58px;font-size:11px;line-height:18px;text-align:center;padding-top:2px;margin-left:3px;white-space:nowrap}
.note{width:42px;position:relative;margin-left:8px}
.note i{position:absolute;left:16px;top:18px;width:17px;height:17px;border:1px solid #a5a5a5;border-radius:50%;background:#444;font:11px/15px "Open Sans",sans-serif;text-align:center}
.peek{width:5px;border-left:1px solid #777;margin-left:1px}
`, `<button class="start" aria-label="Start"><ui-icon name="win"></ui-icon></button>
<label><ui-icon name="search"></ui-icon><input aria-label="Search" placeholder="Type here to search"><ui-icon name="field"></ui-icon></label>
${['taskview', 'edge', 'firefox', 'store', 'quick', 'mail', 'shell', 'folder', 'orange', 'chrome', 'camera', 'chromeface', 'chromeh'].map(n => `<button class="app ${n}" aria-label="${n}"><ui-icon name="${n}"></ui-icon></button>`).join('')}
<div class="wx"><ui-icon name="sun"></ui-icon>21°C</div>
<div class="tray">${['traychev', 'battery', 'net', 'meet', 'sync', 'volume', 'wifi'].map(n => `<button aria-label="${n}"><ui-icon name="${n}"></ui-icon></button>`).join('')}</div>
<div class="clock">1:19 AM<br>4/23/2023</div><button class="note" aria-label="Notifications"><ui-icon name="note"></ui-icon><i>1</i></button><div class="peek"></div>`);

define('app-desktop', `
:host{display:flex;flex-direction:column;min-height:100vh}
.page{display:flex;flex:1;min-height:0}
.site{display:flex;flex-direction:column;flex:1;min-width:0}
.cols{display:flex;flex:1}
.page>scroll-bar{--pre:68;--thumb:522;--post:1}
`, `<window-strip></window-strip><tool-bar></tool-bar><bookmark-bar></bookmark-bar>
<div class="page"><div class="site"><course-header></course-header><div class="cols"><course-sidebar></course-sidebar><lesson-view></lesson-view></div></div><scroll-bar><ui-icon name="dnlight"></ui-icon></scroll-bar></div>
<task-bar></task-bar>`);
</script>
</body>
</html>
